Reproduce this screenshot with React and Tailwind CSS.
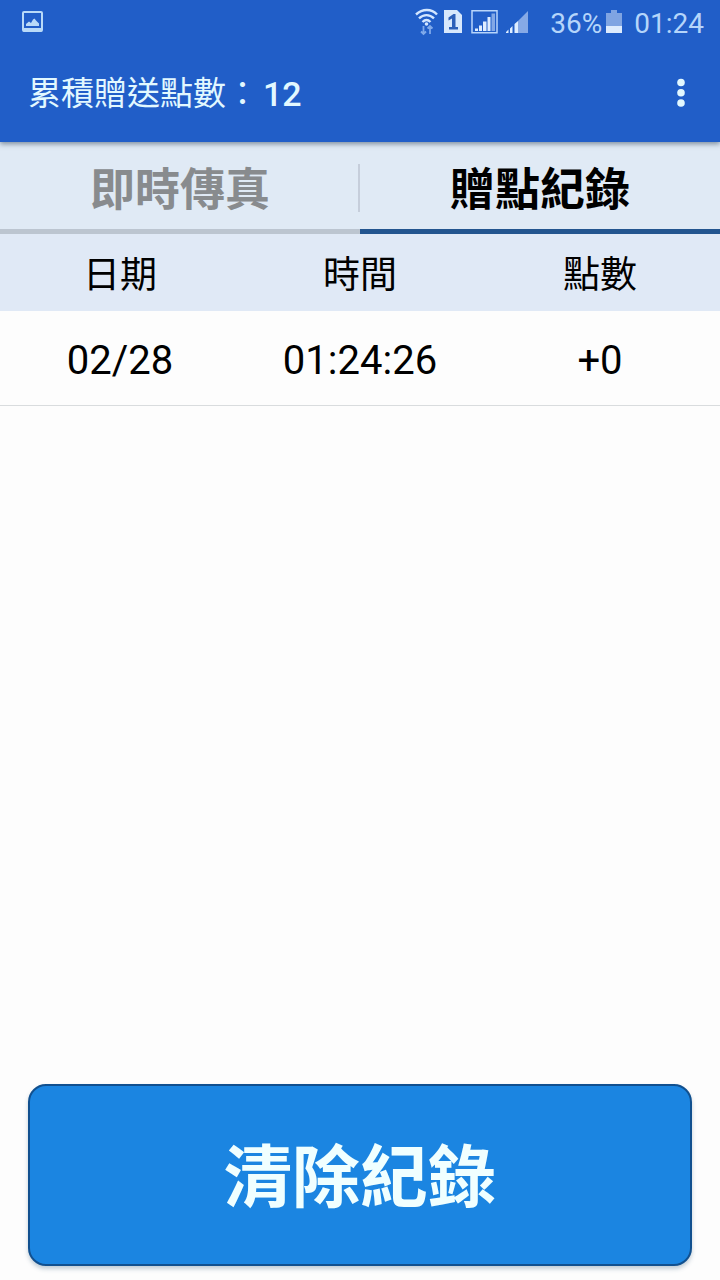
const records = [{ date: "02/28", time: "01:24:26", points: "+0" }];

function PictureIcon() {
  return (
    <svg className="block size-6" viewBox="0 0 24 24" aria-hidden="true">
      <rect x="3" y="2" width="19" height="19" rx="1" fill="none" stroke="#b9daf8" strokeWidth="2" />
      <path d="M3 18H22V21.500H3Z" fill="#b9daf8" />
      <path d="M6 16V14L9 11.500L11 13L13 9.500L14.500 8.500L16 10.500L19 13.500V16Z" fill="#b9daf8" />
    </svg>
  );
}

function WifiIcon() {
  return (
    <svg className="block h-7 w-6" viewBox="0 0 24 28" fill="none" aria-hidden="true">
      <path d="M1 6.500C7.500 0.500 16.500 0.500 22 6.500M4 10.300C8.500 6 14.500 6 19 10.300M7.500 14C10 11.500 13 11.500 15.500 14" stroke="#d3e6ff" strokeWidth="2.400" />
      <circle cx="11.500" cy="16" r="1.800" fill="#d3e6ff" />
      <path d="M8.500 18V26M6 23.500L8.500 26L11 23.500M15 26V18M12.500 20.500L15 18L17.500 20.500" stroke="#7fa9ea" strokeWidth="1.800" />
    </svg>
  );
}

function SimIcon() {
  return (
    <svg className="block h-6 w-5" viewBox="0 0 20 24" aria-hidden="true">
      <path d="M1 0H14L19 5V23H1Z" fill="#d8e8fc" />
      <path d="M5.500 7.500L10.500 4H12.500V17H15V19.500H6V17H9V8.500L5.500 10.500Z" fill="#2c5fb8" />
    </svg>
  );
}

function BoxedSignalIcon() {
  return (
    <svg className="block h-6 w-[27px]" viewBox="0 0 27 24" aria-hidden="true">
      <rect x="1" y="0.750" width="25" height="22" fill="none" stroke="#b8d5fb" strokeWidth="1.500" />
      <path d="M4 18.500H7V21H4ZM8 15.500H11V21H8ZM12 11.500H15.500V21H12ZM16.500 7H19.500V21H16.500Z" fill="#deedff" />
      <path d="M20.500 3.500H24V21H20.500Z" fill="#83a8e6" />
    </svg>
  );
}

function SignalIcon() {
  return (
    <svg className="block h-6 w-6" viewBox="0 0 24 24" aria-hidden="true">
      <path d="M12 11L22 1V23H12Z" fill="#86a9e6" />
      <path d="M0 22L2.500 19.500V23H0ZM4 18.500L6.500 16V23H4ZM8.500 14L12 11V23H8.500Z" fill="#deedff" />
    </svg>
  );
}

function BatteryIcon() {
  return (
    <svg className="block h-6 w-4" viewBox="0 0 16 24" aria-hidden="true">
      <path d="M5 0H11V3H16V23H0V3H5Z" fill="#7fa4e2" />
      <path d="M0 16H16V23H0Z" fill="#ddebfd" />
    </svg>
  );
}

function StatusBar() {
  return (
    <div className="flex h-11 items-center justify-between pr-4 pl-5 text-[#b5d5fa]">
      <PictureIcon />
      <div className="flex items-center">
        <div className="flex items-center gap-1">
          <WifiIcon />
          <div className="flex items-center gap-2">
            <SimIcon />
            <BoxedSignalIcon />
            <SignalIcon />
          </div>
        </div>
        <div className="ml-5 flex items-center gap-1 text-[28px] leading-8">
          <span className="pt-1">36%</span>
          <BatteryIcon />
        </div>
        <time className="ml-3 pt-1 text-[28px] leading-8">01:24</time>
      </div>
    </div>
  );
}

export default function App() {
  return (
    <div className="flex min-h-screen flex-col bg-[#fdfdfd] font-['Roboto','Noto_Sans_CJK_TC',sans-serif] text-black">
      <header className="relative bg-[#215ec8] shadow-[0_2px_5px_rgba(60,80,100,0.6)]">
        <StatusBar />
        <div className="flex h-[98px] items-center justify-between pl-7">
          <h1 className="flex gap-1 pt-0.5 text-[33px] leading-10 text-[#e2f8ff]">
            <span>累積贈送點數：</span>
            <span className="text-[34px] font-medium">12</span>
          </h1>
          <button type="button" aria-label="更多選項" className="flex h-16 w-[78px] items-center justify-center">
            <svg className="block h-8 w-2" viewBox="0 0 8 32" fill="#e2f8ff" aria-hidden="true">
              <circle cx="4" cy="5.500" r="3.800" />
              <circle cx="4" cy="15.700" r="3.800" />
              <circle cx="4" cy="26" r="3.800" />
            </svg>
          </button>
        </div>
      </header>

      <nav className="grid grid-cols-2 bg-[#e0eaf5] text-[45px] leading-[60px] font-bold">
        <button type="button" className="flex h-[92px] items-center border-b-5 border-[#bcc5d0] pt-1 text-[#888b8e]">
          <span className="flex-1 pt-1.5 pl-0.5">即時傳真</span>
          <span className="h-12 w-0.5 bg-[#c6cedb]" />
        </button>
        <button type="button" aria-current="page" className="flex h-[92px] items-center justify-center border-b-5 border-[#23558f] pt-1">
          <span className="pt-1.5">贈點紀錄</span>
        </button>
      </nav>

      <main className="flex flex-1 flex-col justify-between">
        <table className="w-full table-fixed border-collapse text-center">
          <thead>
            <tr className="h-[77px] bg-[#e0e9f6] text-[37px] leading-[48px]">
              <th scope="col" className="pt-1.5 font-normal">日期</th>
              <th scope="col" className="pt-1.5 font-normal">時間</th>
              <th scope="col" className="pt-1.5 font-normal">點數</th>
            </tr>
          </thead>
          <tbody>
            {records.map((record) => (
              <tr key={record.time} className="h-[94px] border-b border-[#d9dcde] text-[40px] leading-[48px]">
                <td className="pt-1.5">{record.date}</td>
                <td className="pt-1.5">{record.time}</td>
                <td className="pt-1.5">{record.points}</td>
              </tr>
            ))}
          </tbody>
        </table>

        <div className="px-7 pb-3.5">
          <button
            type="button"
            className="block h-[182px] w-full rounded-[18px] border-2 border-[#11508f] bg-[#1b85e1] pt-2 text-[68px] leading-[96px] font-bold text-[#f0ffff] shadow-[0_3px_4px_rgba(60,100,130,0.3)]"
          >
            清除紀錄
          </button>
        </div>
      </main>
    </div>
  );
}
